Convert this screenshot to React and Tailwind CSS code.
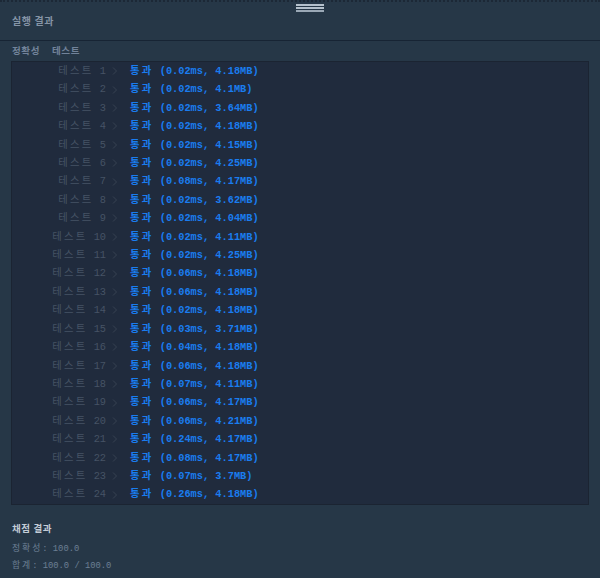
import React from 'react';

const results = [
    ['0.02ms', '4.18MB'],
    ['0.02ms', '4.1MB'],
    ['0.02ms', '3.64MB'],
    ['0.02ms', '4.18MB'],
    ['0.02ms', '4.15MB'],
    ['0.02ms', '4.25MB'],
    ['0.08ms', '4.17MB'],
    ['0.02ms', '3.62MB'],
    ['0.02ms', '4.04MB'],
    ['0.02ms', '4.11MB'],
    ['0.02ms', '4.25MB'],
    ['0.06ms', '4.18MB'],
    ['0.06ms', '4.18MB'],
    ['0.02ms', '4.18MB'],
    ['0.03ms', '3.71MB'],
    ['0.04ms', '4.18MB'],
    ['0.06ms', '4.18MB'],
    ['0.07ms', '4.11MB'],
    ['0.06ms', '4.17MB'],
    ['0.06ms', '4.21MB'],
    ['0.24ms', '4.17MB'],
    ['0.08ms', '4.17MB'],
    ['0.07ms', '3.7MB'],
    ['0.26ms', '4.18MB'],
];

const mono = { fontFamily: '"Liberation Mono", "Noto Sans CJK KR", monospace' };

const App = () => {
    return (
        <div className="w-[600px] h-[578px] bg-[#263747] relative overflow-hidden font-['Noto_Sans_CJK_KR',sans-serif]">
            {/* resize handle */}
            <div className="absolute top-[4px] left-[296px] w-[28px] flex flex-col gap-[1px]">
                <div className="h-[2px] bg-[#b4c0cc]"></div>
                <div className="h-[2px] bg-[#b4c0cc]"></div>
                <div className="h-[2px] bg-[#9aa8b6]"></div>
            </div>

            <div className="border-t-2 border-dotted border-[#1c2836]"></div>

            <div className="h-[39px] border-b border-[#172434] flex items-center px-[12px] pb-[2px]">
                <span className="text-[10px] text-[#8594a6] font-semibold tracking-[0.6px]">실행 결과</span>
            </div>

            <div className="px-[11px]">
                <div className="h-[18px] flex items-center pl-[1px] text-[9.5px] text-[#72839a] font-semibold tracking-[0.6px]">
                    <span>정확성</span>
                    <span className="ml-[12px]">테스트</span>
                </div>

                <div
                    className="mt-[2px] w-[578px] bg-[#202b3d] border border-[#1b2432] text-[10.3px] leading-[18.4px]"
                    style={mono}
                >
                    {results.map(([time, mem], i) => (
                        <div key={i} className="flex items-center whitespace-pre">
                            <span className="w-[94px] text-right text-[#465365]">
                                <span className="tracking-[2.3px]">테스트</span> {i + 1}
                            </span>
                            <span className="w-[24px] pl-[6px] flex items-center">
                                <svg width="6" height="8" viewBox="0 0 6 8" fill="none">
                                    <polyline points="1,0.5 4.5,4 1,7.5" stroke="#364253" strokeWidth="1" />
                                </svg>
                            </span>
                            <span className="text-[#1a7df0] font-bold">
                                <span className="tracking-[2.3px]">통과</span> ({time}, {mem})
                            </span>
                        </div>
                    ))}
                </div>

                <div className="pt-[14px] pl-[1px]">
                    <div className="text-[9.5px] text-[#c3ccd6] leading-[18px] font-semibold tracking-[0.6px]">채점 결과</div>
                    <div className="text-[8.8px] text-[#6c7f94] leading-[17px] mt-[4px] whitespace-pre" style={mono}>
                        <span className="tracking-[2px]">정확성</span>: 100.0
                    </div>
                    <div className="text-[8.8px] text-[#6c7f94] leading-[17px] whitespace-pre" style={mono}>
                        <span className="tracking-[2px]">합계</span>: 100.0 / 100.0
                    </div>
                </div>
            </div>
        </div>
    );
};

export default App;
